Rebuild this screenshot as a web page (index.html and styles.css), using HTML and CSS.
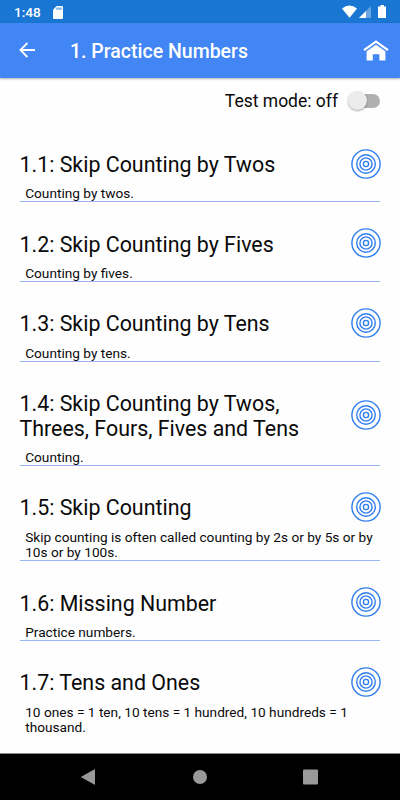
FILE: index.html
```
<!DOCTYPE html>
<html lang="en">
<head>
    <meta charset="UTF-8">
    <meta name="viewport" content="width=device-width, initial-scale=1">
    <title>Practice Numbers</title>
    <link rel="stylesheet" href="styles.css">
</head>
<body>
    <svg class="symbols">
        <symbol id="target" viewBox="0 0 30 30">
            <circle cx="15" cy="15" r="14.1"/>
            <circle cx="15" cy="15" r="9.3"/>
            <circle cx="15" cy="15" r="6.1"/>
            <circle cx="15" cy="15" r="2.6"/>
        </symbol>
    </svg>
    <div class="status-bar">
        <span class="clock">1:48</span>
        <svg class="sd-card" width="10" height="13" viewBox="0 0 10 13">
            <path d="M3.7 0H9a1 1 0 0 1 1 1v11a1 1 0 0 1-1 1H1a1 1 0 0 1-1-1V3.7z" fill="#fff"/>
            <path d="M4 1.5v2.3M6 1.5v2.3M8 1.5v2.3" stroke="#1976d2"/>
        </svg>
        <svg class="signals" width="46" height="14" viewBox="0 0 46 14">
            <path d="M0 3.4Q7.5-2.5 15 3.4L7.5 12.8z" fill="#fff"/>
            <path d="M29 1v12H17z" fill="#fff" opacity=".35"/>
            <path d="M24 6V13H17z" fill="#fff"/>
            <path d="M38.5 0h3.5v1.4h2V13h-8V1.4h2.5z" fill="#fff"/>
        </svg>
    </div>
    <header class="toolbar">
        <svg width="16" height="16" viewBox="0 0 16 16" fill="none" stroke="#fff" stroke-width="1.8">
            <path d="M16 8H1.4M8.4 1L1.4 8l7 7"/>
        </svg>
        <h1>1. Practice Numbers</h1>
        <svg class="home" width="26" height="21" viewBox="0 0 26 21">
            <path d="M1 10.2L13 1.6l12 8.6" fill="none" stroke="#fff" stroke-width="2.2"/>
            <path d="M3.6 11.2L13 4.8l9.4 6.4V20.5h-6v-6.3H9.8v6.3H3.6z" fill="#fff"/>
        </svg>
    </header>
    <main>
        <div class="test-mode">
            <span>Test mode: off</span>
            <span class="switch"><span class="thumb"></span></span>
        </div>
        <section class="lesson">
            <div class="head"><h2>1.1: Skip Counting by Twos</h2><svg class="target"><use href="#target"/></svg></div>
            <p>Counting by twos.</p>
        </section>
        <section class="lesson">
            <div class="head"><h2>1.2: Skip Counting by Fives</h2><svg class="target"><use href="#target"/></svg></div>
            <p>Counting by fives.</p>
        </section>
        <section class="lesson">
            <div class="head"><h2>1.3: Skip Counting by Tens</h2><svg class="target"><use href="#target"/></svg></div>
            <p>Counting by tens.</p>
        </section>
        <section class="lesson">
            <div class="head"><h2>1.4: Skip Counting by Twos, Threes, Fours, Fives and Tens</h2><svg class="target"><use href="#target"/></svg></div>
            <p>Counting.</p>
        </section>
        <section class="lesson">
            <div class="head"><h2>1.5: Skip Counting</h2><svg class="target"><use href="#target"/></svg></div>
            <p>Skip counting is often called counting by 2s or by 5s or by 10s or by 100s.</p>
        </section>
        <section class="lesson">
            <div class="head"><h2>1.6: Missing Number</h2><svg class="target"><use href="#target"/></svg></div>
            <p>Practice numbers.</p>
        </section>
        <section class="lesson">
            <div class="head"><h2>1.7: Tens and Ones</h2><svg class="target"><use href="#target"/></svg></div>
            <p>10 ones = 1 ten, 10 tens = 1 hundred, 10 hundreds = 1 thousand.</p>
        </section>
    </main>
    <nav class="nav-bar">
        <svg width="16" height="16" viewBox="0 0 16 16"><path d="M14 .8v14.4q0 .8-.8.4L.6 8.6q-.8-.6 0-1.2L13.2.4q.8-.4.8.4z"/></svg>
        <svg width="16" height="16" viewBox="0 0 16 16"><circle cx="8" cy="8" r="7"/></svg>
        <svg width="16" height="16" viewBox="0 0 16 16"><rect x="0" y=".4" width="15" height="15" rx="1"/></svg>
    </nav>
</body>
</html>
```
FILE: styles.css
```
body {
    margin: 0;
    height: 800px;
    display: flex;
    flex-direction: column;
    overflow: hidden;
    background: #fefefe;
    color: #0a0a0a;
    font-family: Roboto, sans-serif;
}
.symbols {
    display: none;
}
.status-bar {
    display: flex;
    align-items: center;
    flex: none;
    box-sizing: border-box;
    height: 23px;
    padding: 1px 12px 0 14px;
    background: #1976d2;
    color: #fff;
}
.clock {
    width: 39px;
    font-size: 13.6px;
    font-weight: 500;
}
.signals {
    margin-left: auto;
}
.toolbar {
    display: flex;
    align-items: center;
    flex: none;
    box-sizing: border-box;
    height: 55px;
    padding: 0 11px 1px 19px;
    background: #4285f4;
    color: #fff;
    box-shadow: 0 1px 2px rgba(0, 0, 0, 0.3);
}
h1 {
    flex: 1;
    margin: 2px 0 0 35px;
    font-size: 19.5px;
    font-weight: 500;
}
main {
    flex: 1;
    min-height: 0;
    overflow: hidden;
    padding: 0 20px;
}
.test-mode {
    display: flex;
    align-items: center;
    justify-content: flex-end;
    gap: 11px;
    height: 43.6px;
    padding-top: 1px;
    font-size: 17.5px;
}
.switch {
    display: flex;
    align-items: center;
    width: 31px;
    height: 14px;
    border-radius: 7px;
    background: #b0b0b0;
}
.thumb {
    flex: none;
    width: 19px;
    height: 19px;
    margin-left: -1px;
    border-radius: 50%;
    background: #ececec;
    box-shadow: 0 1px 2px rgba(0, 0, 0, 0.35);
}
.lesson {
    padding-top: 25.8px;
    border-bottom: 1px solid #9db5f5;
}
.head {
    display: flex;
    align-items: center;
    justify-content: space-between;
}
h2 {
    width: 310px;
    margin: 0 0 0 -0.5px;
    padding: 4.6px 0 1px;
    font-size: 21.4px;
    font-weight: 400;
    line-height: 24.7px;
}
.target {
    flex: none;
    width: 30px;
    height: 30px;
    margin-right: -1px;
    fill: none;
    stroke: #2f7df0;
    stroke-width: 1.4;
}
.lesson p {
    margin: 0 0 -0.5px;
    padding: 7.5px 0 0 5.2px;
    font-size: 13.66px;
    line-height: 15.6px;
}
.lesson:last-child {
    border-bottom: none;
}
.nav-bar {
    display: flex;
    align-items: center;
    justify-content: center;
    gap: 95px;
    flex: none;
    height: 46px;
    border-top: 1px solid #888;
    background: #000;
    fill: #999;
}
```
